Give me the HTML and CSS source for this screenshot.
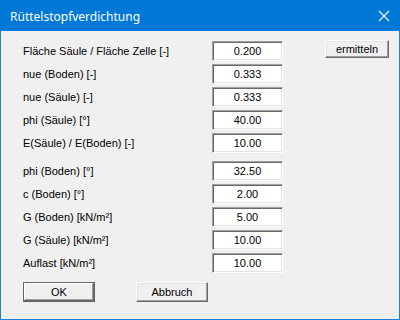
FILE: index.html
```html
<!DOCTYPE html>
<html lang="de">
<head>
    <meta charset="UTF-8">
    <title>Rüttelstopfverdichtung</title>
    <link rel="stylesheet" href="styles.css">
</head>
<body>
    <div class="dialog">
        <div class="titlebar">
            <span class="title">Rüttelstopfverdichtung</span>
            <svg class="close" width="12" height="12" viewBox="0 0 12 12">
                <path d="M1 1 L11 11 M11 1 L1 11" stroke="#fff" stroke-width="1.1" fill="none"/>
            </svg>
        </div>

        <div class="content">
            <div class="group">
                <div class="row">
                    <label>Fläche Säule / Fläche Zelle [-]</label>
                    <div class="field">0.200</div>
                    <button class="btn btn-small">ermitteln</button>
                </div>
                <div class="row">
                    <label>nue (Boden) [-]</label>
                    <div class="field">0.333</div>
                </div>
                <div class="row">
                    <label>nue (Säule) [-]</label>
                    <div class="field">0.333</div>
                </div>
                <div class="row">
                    <label>phi (Säule) [°]</label>
                    <div class="field">40.00</div>
                </div>
                <div class="row">
                    <label>E(Säule) / E(Boden) [-]</label>
                    <div class="field">10.00</div>
                </div>
            </div>

            <div class="group group-second">
                <div class="row">
                    <label>phi (Boden) [°]</label>
                    <div class="field">32.50</div>
                </div>
                <div class="row">
                    <label>c (Boden) [°]</label>
                    <div class="field">2.00</div>
                </div>
                <div class="row">
                    <label>G (Boden) [kN/m²]</label>
                    <div class="field">5.00</div>
                </div>
                <div class="row">
                    <label>G (Säule) [kN/m²]</label>
                    <div class="field">10.00</div>
                </div>
                <div class="row">
                    <label>Auflast [kN/m²]</label>
                    <div class="field">10.00</div>
                </div>
            </div>

            <div class="actions">
                <button class="btn btn-default">OK</button>
                <button class="btn">Abbruch</button>
            </div>
        </div>
    </div>
</body>
</html>
```

FILE: styles.css
```css
html, body {
    margin: 0;
    padding: 0;
}
body {
    width: 400px;
    height: 320px;
    overflow: hidden;
}
.dialog {
    width: 400px;
    height: 320px;
    box-sizing: border-box;
    border: 1px solid #1a83d8;
    border-top: none;
    background-color: #f0f0f0;
    display: flex;
    flex-direction: column;
}
.titlebar {
    height: 31px;
    margin: 0 -1px;
    background-color: #0078d7;
    color: white;
    display: flex;
    align-items: center;
    justify-content: space-between;
    padding: 0 10px 0 10px;
    flex-shrink: 0;
}
.title {
    font-family: "Noto Sans", sans-serif;
    font-size: 12px;
    padding-top: 1px;
}
.close {
    margin-right: 0;
}
.content {
    padding: 10px 0 0 21px;
    font-family: "Liberation Sans", Arial, sans-serif;
    font-size: 11px;
    color: #000;
}
.group {
    display: flex;
    flex-direction: column;
    gap: 3px;
}
.group-second {
    margin-top: 8px;
}
.row {
    display: flex;
    align-items: center;
    height: 20px;
}
.row label {
    width: 189px;
    padding-left: 1px;
}
.field {
    width: 71px;
    height: 20px;
    box-sizing: border-box;
    background: #fff;
    border: 1px solid;
    border-color: #a0a0a0 #fff #fff #a0a0a0;
    box-shadow: inset 1px 1px 0 #696969, inset -1px -1px 0 #e3e3e3;
    text-align: center;
    line-height: 18px;
}
.btn {
    font-family: "Liberation Sans", Arial, sans-serif;
    font-size: 11px;
    color: #000;
    background: #f0f0f0;
    border: 1px solid;
    border-color: #fff #696969 #696969 #fff;
    box-shadow: inset -1px -1px 0 #a0a0a0, inset 1px 1px 0 #e3e3e3;
    padding: 0;
    width: 72px;
    height: 20px;
}
.btn-small {
    width: 64px;
    height: 18px;
    margin-left: 42px;
    margin-top: -4px;
}
.btn-default {
    border-color: #646464;
    box-shadow: inset -1px -1px 0 #696969, inset 1px 1px 0 #fff, inset -2px -2px 0 #a0a0a0;
}
.actions {
    display: flex;
    gap: 41px;
    margin-top: 9px;
    padding-left: 1px;
}
```
